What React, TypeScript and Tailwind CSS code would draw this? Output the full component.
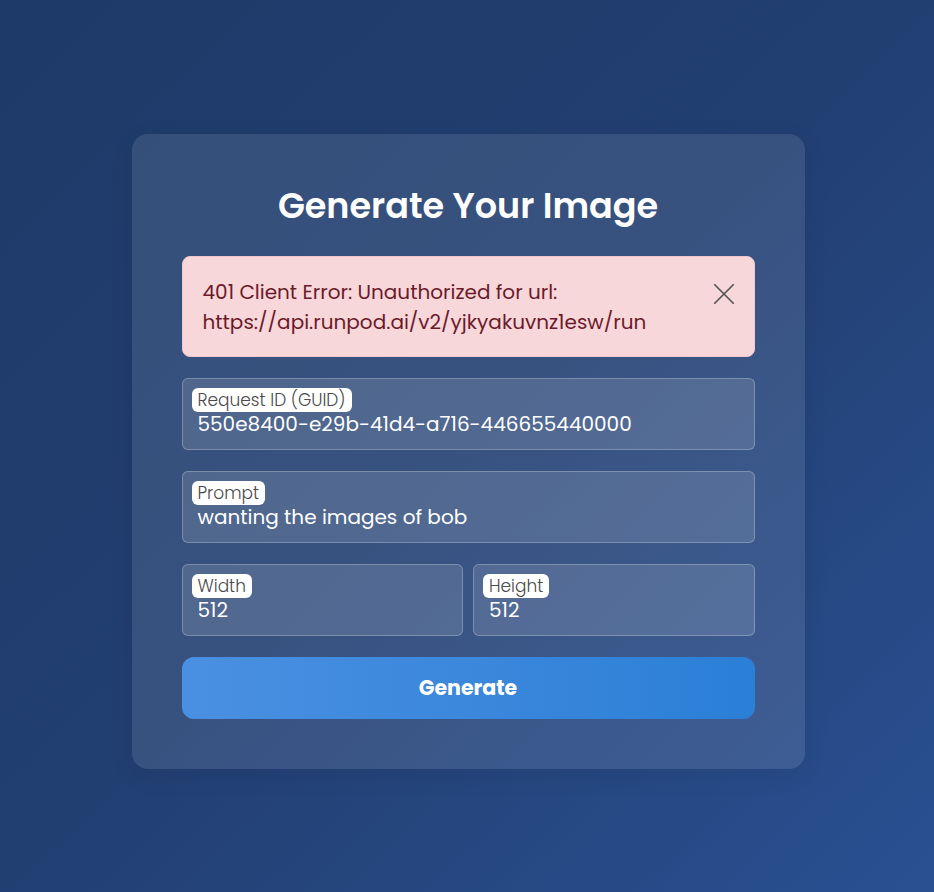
import { useState } from 'react'

const font = { fontFamily: 'Poppins, "Open Sans", "Noto Sans", sans-serif' }

function Field({ label, value, className = '' }: { label: string; value: string; className?: string }) {
  return (
    <div
      className={`h-[72px] rounded-[6px] border border-white/25 bg-white/[0.13] px-[9px] pt-[9px] ${className}`}
    >
      <span className="inline-block rounded-[6px] bg-white px-[6px] text-[17px] font-light leading-[24px] text-[#4a4a4a]">
        {label}
      </span>
      <div className="-mt-[1px] pl-[6px] text-[20px] leading-[24px] text-white">{value}</div>
    </div>
  )
}

export default function App() {
  const [showError, setShowError] = useState(true)

  return (
    <div
      style={font}
      className="flex min-h-[892px] items-start justify-center bg-gradient-to-br from-[#1e3a68] via-[#223f72] to-[#2a5092] pl-[2px] pt-[134px]"
    >
      <div className="w-[673px] rounded-[16px] bg-white/[0.1] px-[50px] pb-[50px] pt-[50px] shadow-[0_6px_24px_rgba(0,0,0,0.08)]">
        <h1 className="text-center text-[35px] font-semibold leading-[44px] text-white">Generate Your Image</h1>

        <div className="mt-[28px] flex flex-col gap-[21px]">
          {showError && (
            <div className="flex items-start justify-between rounded-[8px] border border-[#f5c6cb] bg-[#f8d7da] pb-[19px] pl-[20px] pr-[17px] pt-[20px] text-[#6b1a2a]">
              <p className="text-[20px] leading-[30px]">
                401 Client Error: Unauthorized for url:
                <br />
                https://api.runpod.ai/v2/yjkyakuvnz1esw/run
              </p>
              <button type="button" onClick={() => setShowError(false)} className="mt-[4px] text-[#555]">
                <svg width="26" height="26" viewBox="0 0 24 24" fill="none" stroke="currentColor" strokeWidth="1.6">
                  <path d="M3 3l18 18M21 3L3 21" />
                </svg>
              </button>
            </div>
          )}

          <Field label="Request ID (GUID)" value="550e8400-e29b-41d4-a716-446655440000" />
          <Field label="Prompt" value="wanting the images of bob" />

          <div className="grid grid-cols-2 gap-[10px]">
            <Field label="Width" value="512" />
            <Field label="Height" value="512" />
          </div>

          <button
            type="button"
            className="h-[62px] rounded-[12px] bg-gradient-to-r from-[#4a90e2] to-[#2a7fd6] text-[20.5px] font-bold text-white"
          >
            Generate
          </button>
        </div>
      </div>
    </div>
  )
}
